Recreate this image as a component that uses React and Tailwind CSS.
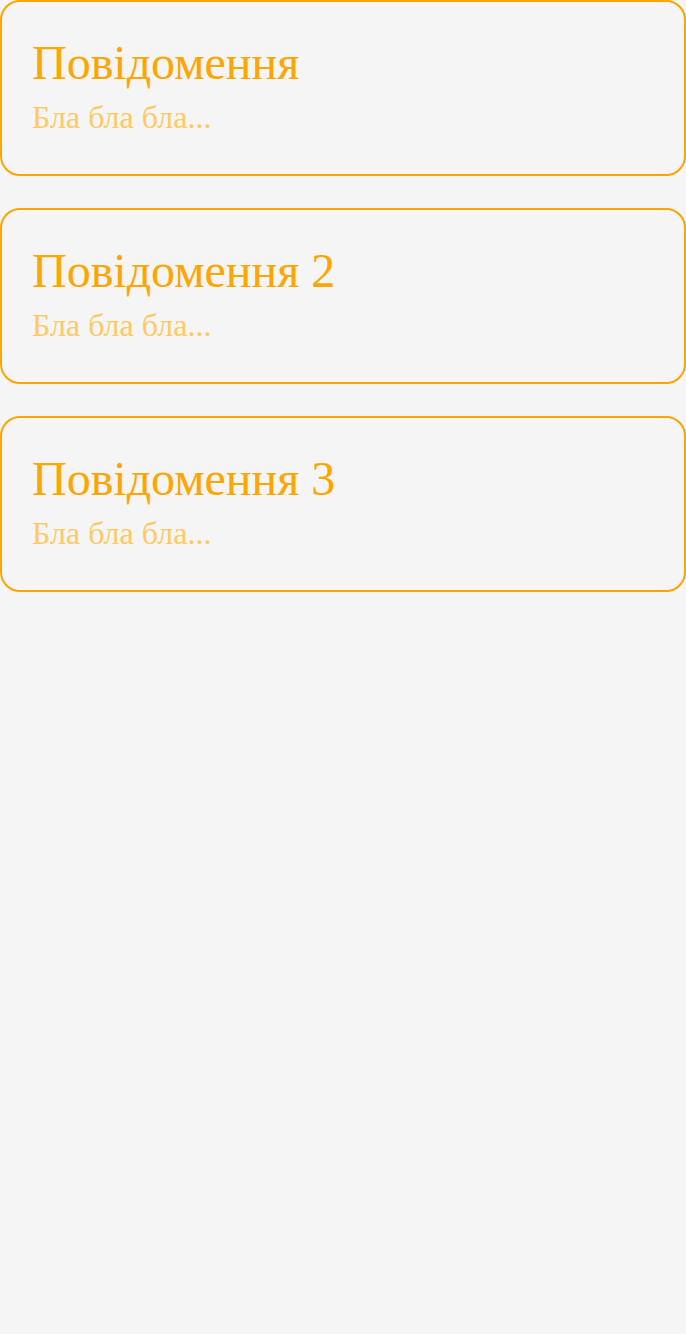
export default function App() {
  const items = ["Повідомення", "Повідомення 2", "Повідомення 3"];
  return (
    <div className="min-h-[1334px] w-full bg-[#f5f5f5] flex flex-col gap-[32px]" style={{ fontFamily: '"Liberation Serif", "Times New Roman", serif' }}>
      {items.map((t) => (
        <div key={t} className="h-[176px] border-2 border-[#ffa500] rounded-[20px] px-[30px] pt-[34px]">
          <div className="text-[48px] leading-[53px] text-[#ffa500]">{t}</div>
          <div className="mt-[10px] text-[32px] leading-[36px] text-[#ffc966]">Бла бла бла...</div>
        </div>
      ))}
    </div>
  );
}
